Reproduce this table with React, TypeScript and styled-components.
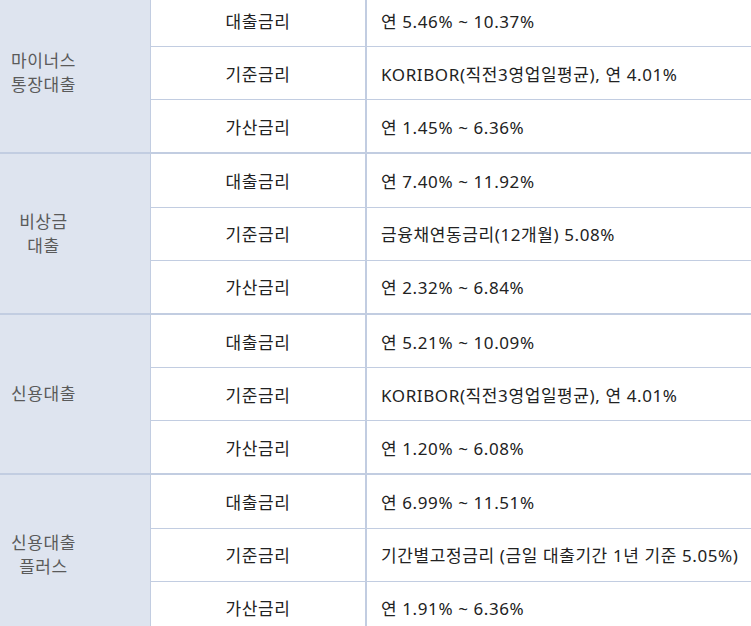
import styled, { createGlobalStyle } from "styled-components";

const GlobalStyle = createGlobalStyle`
  html, body {
    margin: 0;
    padding: 0;
    overflow: hidden;
    background: #ffffff;
  }
`;

const Table = styled.table`
  border-collapse: separate;
  border-spacing: 0;
  margin-top: -6px;
  width: 800px;
  table-layout: fixed;
  font-family: "Noto Sans", "Noto Sans CJK KR", sans-serif;
  font-size: 17px;
  letter-spacing: 0.6px;
  color: #222222;
`;

const GroupCell = styled.th`
  width: 151px;
  background-color: #dee4ef;
  border-right: 1px solid #c2cde1;
  border-bottom: 2px solid #c2cde1;
  color: #5a5a5a;
  font-weight: 400;
  line-height: 24px;
  text-align: center;
  padding: 0 71px 0 8px;
  box-sizing: border-box;
`;

const NameCell = styled.td<{ $last?: boolean }>`
  width: 214px;
  height: 52.17px;
  padding: 0;
  text-align: center;
  border-right: 2px solid #c2cde1;
  border-bottom: ${(p) => (p.$last ? "2px" : "1px")} solid #c2cde1;
`;

const ValueCell = styled.td<{ $last?: boolean }>`
  height: 52.17px;
  padding: 0 0 0 14px;
  text-align: left;
  white-space: nowrap;
  border-bottom: ${(p) => (p.$last ? "2px" : "1px")} solid #c2cde1;
`;

type Group = {
  label: string[];
  rates: [string, string][];
};

const groups: Group[] = [
  {
    label: ["마이너스", "통장대출"],
    rates: [
      ["대출금리", "연 5.46% ~ 10.37%"],
      ["기준금리", "KORIBOR(직전3영업일평균), 연 4.01%"],
      ["가산금리", "연 1.45% ~ 6.36%"],
    ],
  },
  {
    label: ["비상금", "대출"],
    rates: [
      ["대출금리", "연 7.40% ~ 11.92%"],
      ["기준금리", "금융채연동금리(12개월) 5.08%"],
      ["가산금리", "연 2.32% ~ 6.84%"],
    ],
  },
  {
    label: ["신용대출"],
    rates: [
      ["대출금리", "연 5.21% ~ 10.09%"],
      ["기준금리", "KORIBOR(직전3영업일평균), 연 4.01%"],
      ["가산금리", "연 1.20% ~ 6.08%"],
    ],
  },
  {
    label: ["신용대출", "플러스"],
    rates: [
      ["대출금리", "연 6.99% ~ 11.51%"],
      ["기준금리", "기간별고정금리 (금일 대출기간 1년 기준 5.05%)"],
      ["가산금리", "연 1.91% ~ 6.36%"],
    ],
  },
];

const App = () => {
  return (
    <>
      <GlobalStyle />
      <Table>
        <tbody>
          {groups.map((group) =>
            group.rates.map(([name, value], i) => {
              const last = i === group.rates.length - 1;
              return (
                <tr key={group.label.join("") + name}>
                  {i === 0 && (
                    <GroupCell rowSpan={group.rates.length}>
                      {group.label.map((line, j) => (
                        <span key={line}>
                          {j > 0 && <br />}
                          {line}
                        </span>
                      ))}
                    </GroupCell>
                  )}
                  <NameCell $last={last}>{name}</NameCell>
                  <ValueCell $last={last}>{value}</ValueCell>
                </tr>
              );
            })
          )}
        </tbody>
      </Table>
    </>
  );
};

export default App;
